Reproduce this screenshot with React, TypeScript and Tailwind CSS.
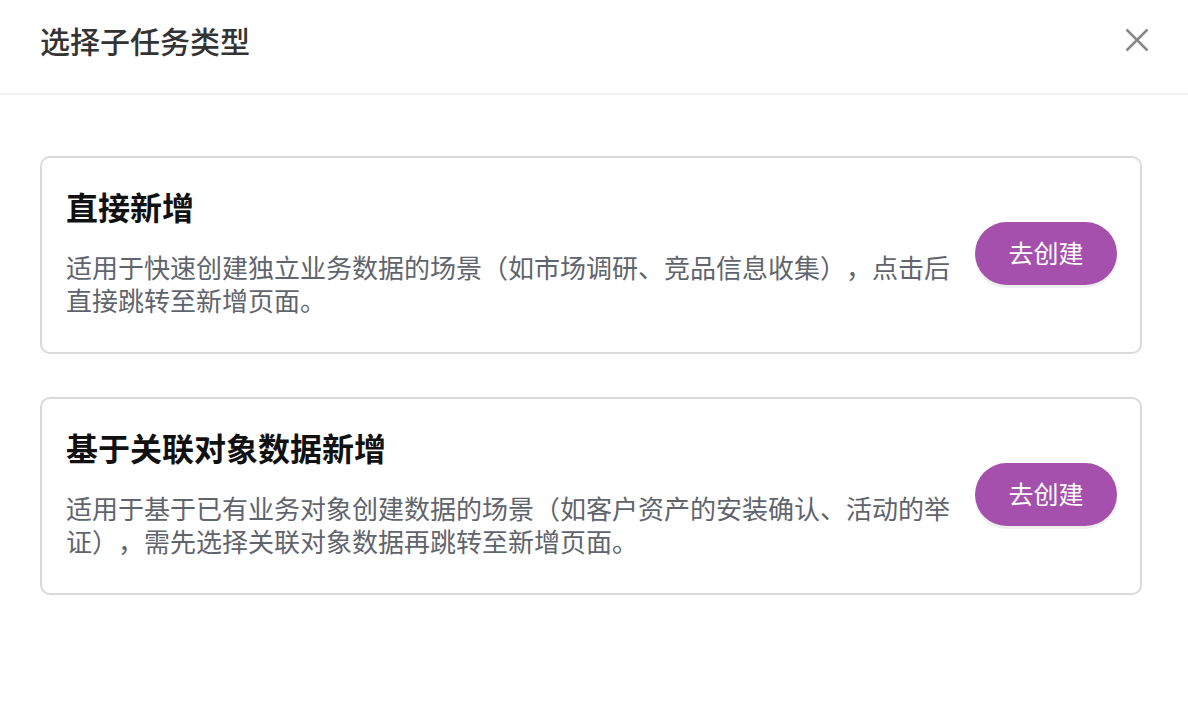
import React from "react";

const font = { fontFamily: '"Noto Sans CJK SC", "Noto Sans", sans-serif' };

function Card({ title, desc }: { title: string; desc: string }) {
  return (
    <div className="flex items-center rounded-[10px] border-2 border-[#dadada] bg-white pl-[24px] pr-[23px] pt-[28px] pb-[36px]">
      <div className="flex-1 mr-[20px]">
        <div className="text-[32px] leading-[40px] font-bold text-[#111]">{title}</div>
        <div className="mt-[24px] text-[26px] leading-[33px] text-[#60646c] [text-spacing-trim:space-all]">{desc}</div>
      </div>
      <button className="w-[142px] h-[63px] shrink-0 mt-[4px] rounded-full bg-[#a550ad] text-white text-[25px] shadow-[0_3px_0_#efefef]">
        去创建
      </button>
    </div>
  );
}

export default function App() {
  return (
    <div className="w-[1188px] h-[728px] bg-white overflow-hidden [text-spacing-trim:space-all]" style={font}>
      <div className="flex items-start justify-between h-[95px] border-b-2 border-[#f0f0f0] pl-[40px] pr-[39px] pt-[20px]">
        <div className="text-[30px] leading-[40px] font-medium text-[#333]">选择子任务类型</div>
        <svg width="24" height="24" viewBox="0 0 24 24" className="text-[#888] mt-[8px]">
          <path d="M1.5 1.5 L22.5 22.5 M22.5 1.5 L1.5 22.5" stroke="currentColor" strokeWidth="2.5" strokeLinecap="butt" />
        </svg>
      </div>
      <div className="flex flex-col gap-[43px] pl-[40px] pr-[46px] pt-[61px]">
        <Card
          title="直接新增"
          desc="适用于快速创建独立业务数据的场景（如市场调研、竞品信息收集），点击后直接跳转至新增页面。"
        />
        <Card
          title="基于关联对象数据新增"
          desc="适用于基于已有业务对象创建数据的场景（如客户资产的安装确认、活动的举证），需先选择关联对象数据再跳转至新增页面。"
        />
      </div>
    </div>
  );
}
